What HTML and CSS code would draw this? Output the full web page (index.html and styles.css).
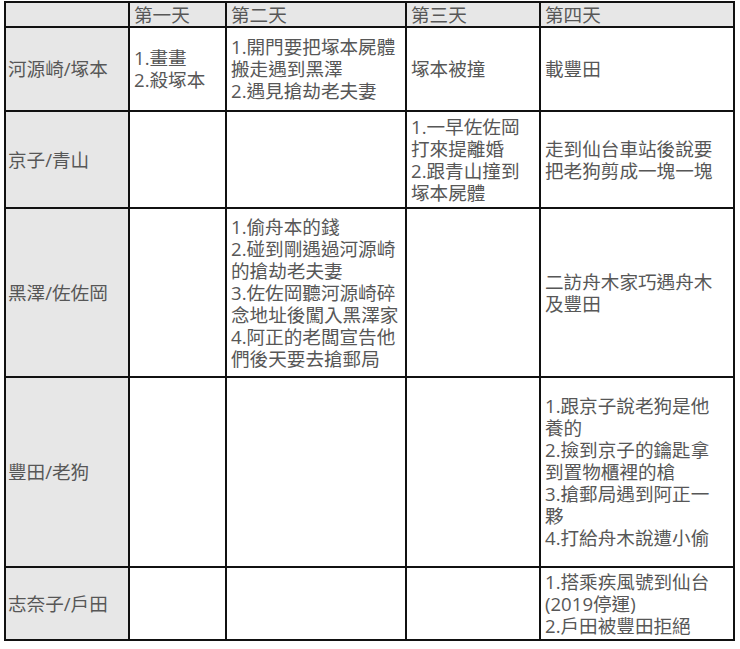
FILE: index.html
```html
<!DOCTYPE html>
<html lang="zh-Hant">
<head>
<meta charset="utf-8">
<title>時間表</title>
<link rel="stylesheet" href="styles.css">
</head>
<body>
<table class="grid">
  <colgroup>
    <col class="c0"><col class="c1"><col class="c2"><col class="c3"><col class="c4">
  </colgroup>
  <tr class="r-head">
    <td class="gray"></td>
    <td class="gray">第一天</td>
    <td class="gray">第二天</td>
    <td class="gray">第三天</td>
    <td class="gray">第四天</td>
  </tr>
  <tr class="r1">
    <td class="gray name">河源崎/塚本</td>
    <td>1.畫畫<br>2.殺塚本</td>
    <td>1.開門要把塚本屍體<br>搬走遇到黑澤<br>2.遇見搶劫老夫妻</td>
    <td>塚本被撞</td>
    <td>載豐田</td>
  </tr>
  <tr class="r2">
    <td class="gray name">京子/青山</td>
    <td></td>
    <td></td>
    <td>1.一早佐佐岡<br>打來提離婚<br>2.跟青山撞到<br>塚本屍體</td>
    <td>走到仙台車站後說要<br>把老狗剪成一塊一塊</td>
  </tr>
  <tr class="r3">
    <td class="gray name">黑澤/佐佐岡</td>
    <td></td>
    <td>1.偷舟本的錢<br>2.碰到剛遇過河源崎<br>的搶劫老夫妻<br>3.佐佐岡聽河源崎碎<br>念地址後闖入黑澤家<br>4.阿正的老闆宣告他<br>們後天要去搶郵局</td>
    <td></td>
    <td>二訪舟木家巧遇舟木<br>及豐田</td>
  </tr>
  <tr class="r4">
    <td class="gray name">豐田/老狗</td>
    <td></td>
    <td></td>
    <td></td>
    <td>1.跟京子說老狗是他<br>養的<br>2.撿到京子的鑰匙拿<br>到置物櫃裡的槍<br>3.搶郵局遇到阿正一<br>夥<br>4.打給舟木說遭小偷</td>
  </tr>
  <tr class="r5">
    <td class="gray name">志奈子/戶田</td>
    <td></td>
    <td></td>
    <td></td>
    <td>1.搭乘疾風號到仙台<br>(2019停運)<br>2.戶田被豐田拒絕</td>
  </tr>
</table>
</body>
</html>
```
FILE: styles.css
```css
html, body {
  margin: 0;
  padding: 0;
  background: #ffffff;
}

.grid {
  margin: 1px 0 0 4px;
  border-collapse: collapse;
  table-layout: fixed;
  width: 731px;
  font-family: "Open Sans", "Noto Sans CJK TC", sans-serif;
  font-size: 18.6px;
  line-height: 22px;
  color: #575757;
}

.c0 { width: 124px; }
.c1 { width: 97px; }
.c2 { width: 180px; }
.c3 { width: 134px; }
.c4 { width: 194px; }

.grid td {
  border: 2px solid #111111;
  padding: 0 3px 0 4px;
  vertical-align: middle;
  white-space: nowrap;
  overflow: hidden;
}

.grid td.gray {
  background: #e7e7e7;
}

.grid td.name {
  padding-left: 2px;
}

.r-head { height: 25px; }
.r1 { height: 84px; }
.r2 { height: 97px; }
.r3 { height: 169px; }
.r4 { height: 190px; }
.r5 { height: 73px; }
```
